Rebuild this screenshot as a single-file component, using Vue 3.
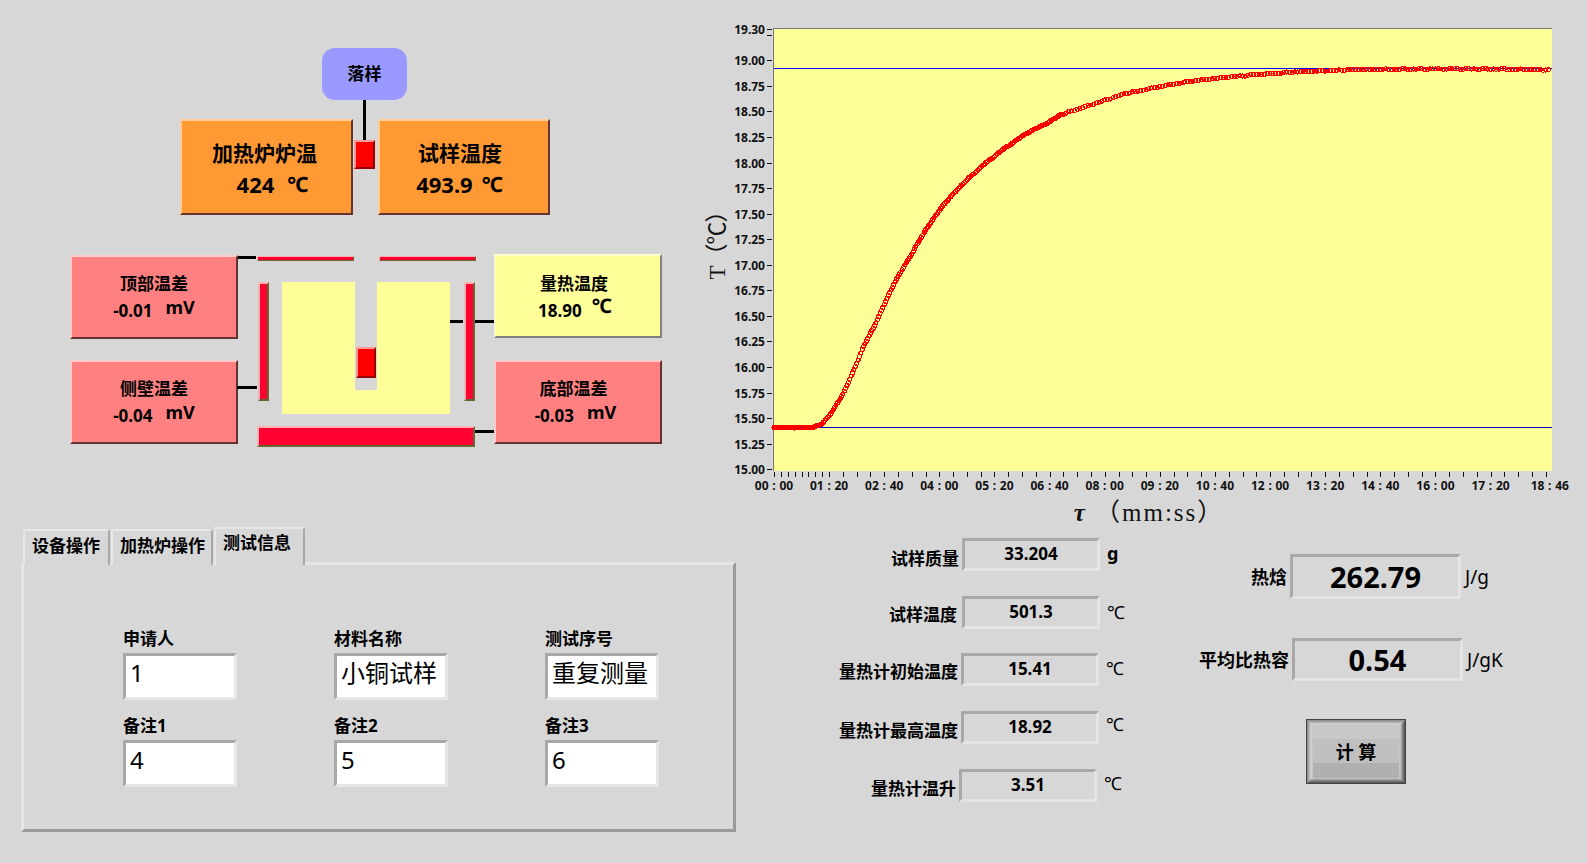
<script setup>
import { computed } from 'vue'

const X0 = 774, PX_S = 0.689, Y15 = 469.3, PX_U = 102.25
const sx = t => X0 + t * PX_S
const sy = v => Y15 - (v - 15) * PX_U

const yTicks = []
for (let i = 0; i <= 17; i++) {
  const v = 15 + i * 0.25
  yTicks.push({ y: sy(v), label: v.toFixed(2), show: i !== 17 })
}
const yExtra = { y: sy(19.3), label: '19.30' }

const fmt = s => {
  const m = String(Math.floor(s / 60)).padStart(2, '0')
  const c = String(s % 60).padStart(2, '0')
  return `${m} : ${c}`
}
const xLabels = []
for (let t = 0; t <= 1040; t += 80) xLabels.push({ x: sx(t), label: fmt(t) })
xLabels.push({ x: sx(1126), label: '18 : 46' })

const xTicks = []
for (let t = 0; t < 80; t += 10) xTicks.push(sx(t))
for (let t = 80; t <= 1126; t += 20) xTicks.push(sx(t))

// curve traced from the recorded run, in panel pixels
const trace = [
  [774, 427.5], [812, 427.5], [821.7, 424.5], [833.3, 410], [843.3, 393.3], [853.3, 371.7],
  [863.3, 346.7], [873.3, 328.3], [881.7, 310], [895, 281.7], [910, 256.7], [926.7, 228.3],
  [943.3, 205], [963.3, 183.3], [983.3, 165], [1003.3, 149.3], [1026.7, 133.3], [1050, 121.7],
  [1060, 115], [1093.3, 104], [1126.7, 93.3], [1160, 86.7], [1193.3, 80.7], [1226.7, 77.3],
  [1260, 74.3], [1293.3, 72], [1326.7, 70.7], [1356.7, 69.5], [1420, 69], [1500, 69], [1552, 70],
]
function yAt(x) {
  for (let i = 1; i < trace.length; i++) {
    if (x <= trace[i][0]) {
      const [a, b] = trace[i - 1], [c, d] = trace[i]
      return b + (d - b) * (x - a) / (c - a)
    }
  }
  return 70
}
const points = computed(() => {
  const out = []
  let t = 0
  while (t <= 1125) {
    const x = sx(t)
    const noise = Math.sin(t * 0.37) * Math.cos(t * 0.11) * 0.5
    out.push({ x, y: yAt(x) + noise })
    t += t < 420 ? 2 : 4
  }
  return out
})

const meas = [
  { label: '试样质量', value: '33.204', unit: 'g', dx: 2, lx: -1, ly: 5, uy: -3 },
  { label: '试样温度', value: '501.3', unit: '℃', dx: 2, lx: -3, ly: 3, uy: 0 },
  { label: '量热计初始温度', value: '15.41', unit: '℃', dx: 1, lx: -1, ly: 2, uy: -3 },
  { label: '量热计最高温度', value: '18.92', unit: '℃', dx: 1, lx: -1, ly: 3, uy: -7 },
  { label: '量热计温升', value: '3.51', unit: '℃', dx: -1, lx: -1, ly: 4, uy: -4 },
]
const fields = [
  { label: '申请人', value: '1' },
  { label: '材料名称', value: '小铜试样' },
  { label: '测试序号', value: '重复测量' },
  { label: '备注1', value: '4' },
  { label: '备注2', value: '5' },
  { label: '备注3', value: '6' },
]
const tabs = ['设备操作', '加热炉操作', '测试信息']
</script>

<template>
  <div class="page">
    <section class="top">
      <div class="diagram">
        <div class="drop">落样</div>
        <i class="wire w-drop"></i>

        <div class="temp t-furnace">
          <div class="t-title">加热炉炉温</div>
          <div class="t-line"><span>424</span><span class="t-unit">℃</span></div>
        </div>
        <div class="sample s-top"></div>
        <div class="temp t-sample">
          <div class="t-title">试样温度</div>
          <div class="t-line"><span>493.9</span><span class="t-unit">℃</span></div>
        </div>

        <div class="diff d-top">
          <div class="d-title">顶部温差</div>
          <div class="d-line"><span>-0.01</span><span class="d-unit">mV</span></div>
        </div>
        <div class="diff d-side">
          <div class="d-title">侧壁温差</div>
          <div class="d-line"><span>-0.04</span><span class="d-unit">mV</span></div>
        </div>
        <div class="diff d-cal">
          <div class="d-title">量热温度</div>
          <div class="d-line"><span>18.90</span><span class="d-unit d-c">℃</span></div>
        </div>
        <div class="diff d-bottom">
          <div class="d-title">底部温差</div>
          <div class="d-line"><span>-0.03</span><span class="d-unit">mV</span></div>
        </div>

        <i class="wire w-top"></i>
        <i class="wire w-side"></i>
        <i class="wire w-r1"></i>
        <i class="wire w-r2"></i>
        <i class="wire w-bottom"></i>

        <div class="heater h-tl"></div>
        <div class="heater h-tr"></div>
        <div class="heater h-l"></div>
        <div class="heater h-r"></div>
        <div class="heater h-b"></div>

        <div class="block">
          <div class="slot"></div>
        </div>
        <div class="sample s-in"></div>
      </div>

      <svg class="chart" width="887" height="527" viewBox="700 0 887 527">
        <rect x="773" y="28" width="779" height="443" fill="#ffff99" />
        <path d="M773.5 28V471M773 28.5H1552" stroke="#777" fill="none" shape-rendering="crispEdges" />
        <line x1="774" y1="68.5" x2="1552" y2="68.5" stroke="#0000ff" shape-rendering="crispEdges" />
        <line x1="774" y1="427.5" x2="1552" y2="427.5" stroke="#0000cc" shape-rendering="crispEdges" />
        <g fill="none" stroke="#ff0000" stroke-width="1.1" shape-rendering="crispEdges">
          <circle v-for="(p, i) in points" :key="i" :cx="p.x" :cy="p.y" r="2" />
        </g>
        <g stroke="#111" shape-rendering="crispEdges">
          <line v-for="(t, i) in yTicks" :key="i" x1="767" x2="772" :y1="Math.round(t.y) + 0.5" :y2="Math.round(t.y) + 0.5" />
          <line x1="767" x2="772" :y1="yExtra.y" :y2="yExtra.y" />
          <line v-for="(x, i) in xTicks" :key="'x' + i" :x1="Math.round(x) + 0.5" :x2="Math.round(x) + 0.5" y1="472" y2="477" />
        </g>
        <g class="tick" text-anchor="end">
          <text v-for="(t, i) in yTicks.filter(q => q.show)" :key="i" x="765" :y="t.y + 5">{{ t.label }}</text>
          <text x="765" :y="yExtra.y + 4">{{ yExtra.label }}</text>
        </g>
        <g class="tick tick-x" text-anchor="middle">
          <text v-for="(t, i) in xLabels" :key="i" :x="t.x" y="490">{{ t.label }}</text>
        </g>
        <text class="axis axis-y" transform="translate(725 240) rotate(-90)" text-anchor="middle">T（℃）</text>
        <text class="axis axis-x" x="1149" y="521" text-anchor="middle"><tspan class="tau">τ</tspan> （mm:ss）</text>
      </svg>
    </section>

    <section class="bottom">
      <div class="tabbed">
        <div class="tabs">
          <div v-for="(t, i) in tabs" :key="t" class="tab" :class="{ active: i === 2 }">{{ t }}</div>
        </div>
        <div class="tab-panel">
          <div v-for="f in fields" :key="f.label" class="field">
            <label>{{ f.label }}</label>
            <div class="input">{{ f.value }}</div>
          </div>
        </div>
      </div>

      <div class="results">
        <div class="meas-list">
          <div v-for="m in meas" :key="m.label" class="meas" :style="{ marginLeft: m.dx + 'px' }">
            <span class="meas-label" :style="{ paddingTop: m.ly + 'px' }"><span :style="{ marginRight: -m.lx + 'px' }">{{ m.label }}</span></span>
            <span class="meas-box">{{ m.value }}</span>
            <span class="meas-unit" :class="{ bold: m.unit === 'g' }" :style="{ marginTop: m.uy + 'px' }">{{ m.unit }}</span>
          </div>
        </div>
        <div class="sum-list">
          <div class="sum">
            <span class="sum-label">热焓</span>
            <span class="sum-box">262.79</span>
            <span class="sum-unit">J/g</span>
          </div>
          <div class="sum sum-2">
            <span class="sum-label">平均比热容</span>
            <span class="sum-box">0.54</span>
            <span class="sum-unit">J/gK</span>
          </div>
          <button class="calc" type="button"><span>计 算</span></button>
        </div>
      </div>
    </section>
  </div>
</template>

<style>
html, body { margin: 0; background: #d7d7d7; }
</style>

<style scoped>
.page {
  width: 1587px;
  height: 863px;
  overflow: hidden;
  background: #d7d7d7;
  color: #000;
  font-family: "Noto Sans", "Noto Sans CJK SC", sans-serif;
  font-weight: 700;
  display: flex;
  flex-direction: column;
}
.top { display: flex; height: 527px; flex: none; }
.bottom { display: flex; flex: 1; }

/* schematic */
.diagram { position: relative; width: 700px; height: 527px; flex: none; }
.drop {
  position: absolute; left: 322px; top: 48px; width: 85px; height: 52px;
  background: #9999ff; border-radius: 13px;
  display: flex; align-items: center; justify-content: center;
  font-size: 17px; padding-bottom: 4px; box-sizing: border-box;
}
.wire { position: absolute; background: #000; display: block; }
.w-drop { left: 363px; top: 100px; width: 3px; height: 40px; }
.w-top { left: 238px; top: 256px; width: 18px; height: 3px; }
.w-side { left: 237px; top: 386px; width: 20px; height: 3px; }
.w-r1 { left: 450px; top: 320px; width: 13px; height: 3px; }
.w-r2 { left: 475px; top: 320px; width: 19px; height: 3px; }
.w-bottom { left: 475px; top: 430px; width: 19px; height: 3px; }

.temp {
  position: absolute; top: 119px; height: 96px; box-sizing: border-box;
  background: #ff9933;
  border: 2px solid; border-color: #ffcc99 #663333 #663333 #ffcc99;
  display: flex; flex-direction: column; align-items: center; padding-top: 16px;
}
.t-furnace { left: 180px; width: 173px; }
.t-sample { left: 378px; width: 172px; }
.t-title { font-size: 21px; line-height: 32px; }
.t-line { font-size: 22px; line-height: 30px; display: flex; gap: 13px; }
.t-furnace .t-title { margin-left: -4px; }
.t-sample .t-title { margin-left: -8px; }
.t-sample .t-line { margin-left: -9px; gap: 9px; }
.t-furnace .t-line { margin-left: 12px; }
.t-unit { font-size: 21px; }

.sample {
  position: absolute; box-sizing: border-box; background: #ff0000;
  border: 2px solid; border-color: #ff9999 #990000 #990000 #ff9999;
}
.s-top { left: 354px; top: 140px; width: 21px; height: 29px; }
.s-in { left: 356px; top: 347px; width: 20px; height: 31px; }

.diff {
  position: absolute; box-sizing: border-box; width: 168px; height: 84px;
  background: #ff8080;
  border: 2px solid; border-color: #ffcccc #663333 #663333 #ffcccc;
  display: flex; flex-direction: column; align-items: center; padding-top: 15px;
}
.d-top { left: 70px; top: 255px; }
.d-side { left: 70px; top: 360px; }
.d-bottom { left: 494px; top: 360px; width: 168px; }
.d-bottom .d-title { margin-left: -9px; }
.d-bottom .d-line { margin-left: -5px; }
.d-cal {
  left: 494px; top: 254px; width: 168px; background: #ffff99;
  border-color: #ffffcc #808080 #808080 #ffffcc;
}
.d-cal .d-title { margin-left: -8px; padding-top: 1px; }
.d-cal .d-line { margin-left: -6px; gap: 10px; }
.d-title { font-size: 17px; line-height: 24px; }
.d-line { font-size: 17px; line-height: 28px; display: flex; gap: 13px; padding-top: 1px; }
.d-unit { margin-top: -4px; font-size: 18px; }
.d-c { font-size: 20px; margin-top: -5px; }

.heater {
  position: absolute; box-sizing: border-box; background: #ff0033;
  border: 1px solid; border-color: #ffb3b3 #666633 #666633 #ffb3b3;
}
.h-tl { left: 257px; top: 256px; width: 97px; height: 5px; }
.h-tr { left: 379px; top: 256px; width: 97px; height: 5px; }
.h-l { left: 258px; top: 282px; width: 11px; height: 119px; border-width: 2px; }
.h-r { left: 464px; top: 282px; width: 11px; height: 119px; border-width: 2px; }
.h-b { left: 257px; top: 426px; width: 218px; height: 21px; border-width: 2px; }

.block { position: absolute; left: 282px; top: 282px; width: 168px; height: 132px; background: #ffff99; }
.slot { position: absolute; left: 73px; top: 0; width: 22px; height: 108px; background: #d7d7d7; }

/* chart */
.chart { display: block; flex: none; }
.tick { font-size: 12px; font-weight: 700; fill: #111; }
.tick-x { word-spacing: 0.6px; }
.axis { font-family: "Liberation Serif", "Noto Sans CJK SC", serif; font-weight: 400; fill: #111; }
.axis-y { font-size: 23px; letter-spacing: -1px; }
.axis-x { font-size: 25px; letter-spacing: 2px; }
.tau { font-style: italic; font-weight: 700; }

/* tabs */
.tabbed { width: 760px; flex: none; box-sizing: border-box; padding-left: 21px; }
.tabs { display: flex; align-items: flex-end; gap: 1px; height: 38px; padding-left: 2px; position: relative; z-index: 1; }
.tab {
  box-sizing: border-box; height: 36px; padding: 2px 0 0 7px;
  font-size: 17px; line-height: 26px;
  background: #d7d7d7;
  border: solid #e6e6e6; border-width: 2px 0 0 2px;
  border-right: 2px solid #a8a8a8;
  border-radius: 2px 2px 0 0;
}
.tab:nth-child(1) { width: 87px; }
.tab:nth-child(2) { width: 102px; }
.tab.active { width: 91px; height: 38px; padding-top: 1px; position: relative; }
.tab-panel {
  box-sizing: border-box; width: 715px; height: 270px; margin-top: -3px;
  border: 3px solid; border-color: #e6e6e6 #9a9a9a #9a9a9a #e6e6e6;
  padding: 64px 0 0 99px;
  display: grid; grid-template-columns: repeat(3, 114px); column-gap: 97px; row-gap: 16px; align-content: start;
}
.field { display: flex; flex-direction: column; }
.field label { font-size: 17px; line-height: 20px; margin: 0 0 4px; white-space: nowrap; }
.input {
  box-sizing: border-box; height: 47px; background: #fff;
  border: 3px solid; border-color: #a8a8a8 #e6e6e6 #e6e6e6 #a8a8a8;
  font-size: 24px; font-weight: 400; line-height: 34px; padding-left: 4px; white-space: nowrap;
}

/* results */
.results { display: flex; flex: 1; }
.meas-list { width: 370px; flex: none; padding-top: 11px; display: flex; flex-direction: column; gap: 24.7px; }
.meas { display: flex; align-items: center; height: 33px; }
.meas-label { width: 198px; flex: none; text-align: right; font-size: 17px; white-space: nowrap; }
.meas-box {
  box-sizing: border-box; width: 138px; height: 33px; margin-left: 2px; flex: none;
  border: 3px solid; border-color: #a8a8a8 #e4e4e4 #e4e4e4 #a8a8a8;
  font-size: 17px; line-height: 25px; text-align: center;
}
.meas-unit { margin-left: 7px; font-size: 18px; font-weight: 400; }
.meas-unit.bold { font-weight: 700; font-size: 18px; }

.sum-list { padding-top: 27px; display: flex; flex-direction: column; }
.sum { display: flex; align-items: center; height: 45px; }
.sum-2 { margin-top: 39px; height: 43px; margin-left: 2px; }
.sum-label { width: 157px; flex: none; text-align: right; font-size: 18px; padding-bottom: 2px; white-space: nowrap; }
.sum-box {
  box-sizing: border-box; width: 171px; height: 100%; margin-left: 3px; flex: none;
  border: 3px solid; border-color: #a8a8a8 #e4e4e4 #e4e4e4 #a8a8a8;
  font-size: 29px; display: flex; align-items: center; justify-content: center;
}
.sum-unit { margin-left: 4px; font-size: 19px; font-weight: 400; }
.calc {
  margin: 38px 0 0 176px; width: 100px; height: 65px; padding: 0;
  box-sizing: border-box; font: inherit; font-size: 18px; color: #000;
  border: 1px solid #444;
  background: #c6c6c6;
  box-shadow:
    inset 1px 1px 0 #909090, inset -1px -1px 0 #5a5a5a,
    inset 2px 2px 0 #a2a2a2, inset -2px -2px 0 #707070,
    inset 3px 3px 0 #b4b4b4, inset -3px -3px 0 #888,
    inset 4px 4px 0 #c8c8c8, inset -4px -4px 0 #a0a0a0,
    inset 5px 5px 0 #d2d2d2, inset -5px -5px 0 #c0c0c0;
  display: flex; align-items: stretch; justify-content: stretch;
}
.calc span {
  flex: 1; margin: 6px 6px 5px; padding-bottom: 3px;
  background: linear-gradient(#c8c8c8 0 25%, #bfbfbf 25% 72%, #b0b0b0 72%);
  display: flex; align-items: center; justify-content: center;
}
</style>
